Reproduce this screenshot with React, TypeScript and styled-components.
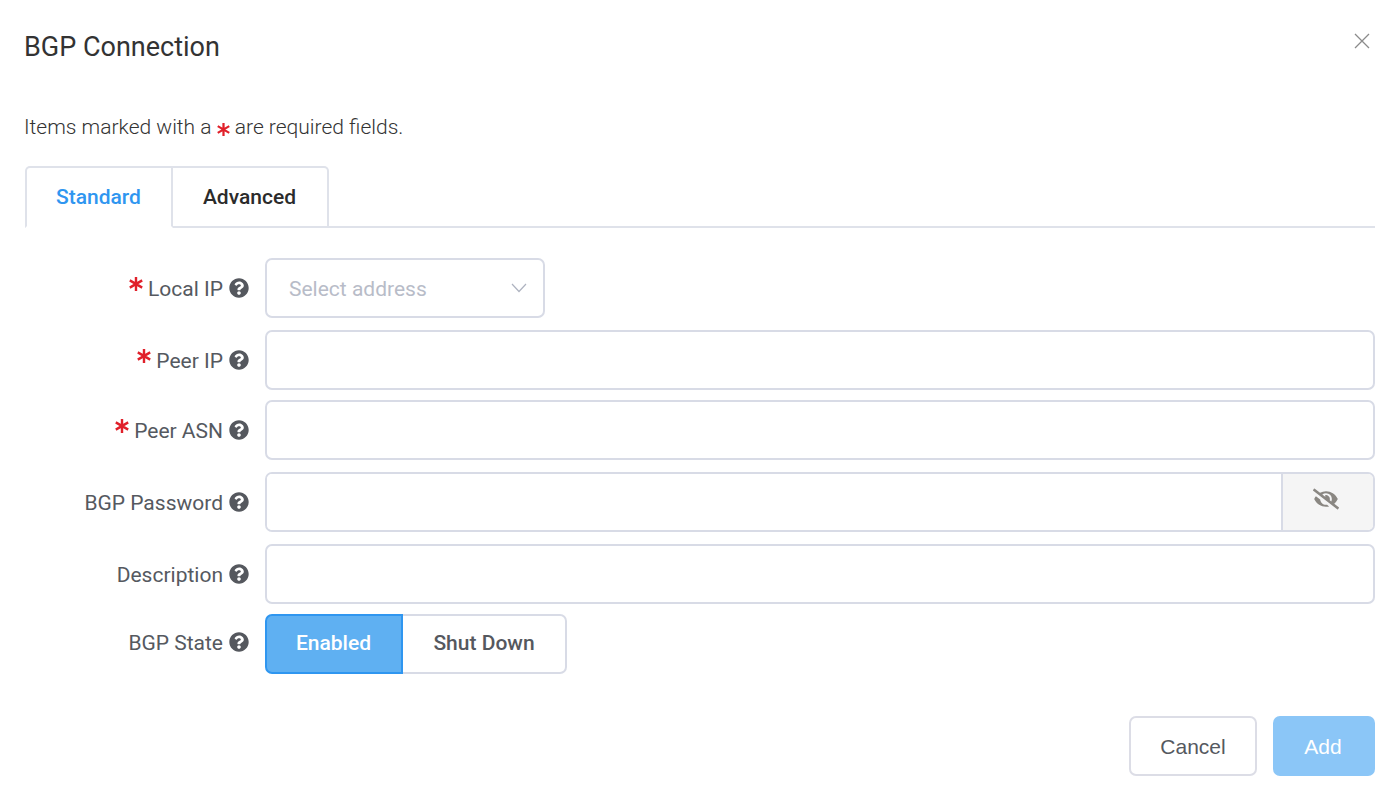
import React, { FC } from 'react';
import styled, { createGlobalStyle } from 'styled-components';
import { FaQuestionCircle, FaEyeSlash } from 'react-icons/fa';

const GlobalStyle = createGlobalStyle`
  html, body {
    margin: 0;
    padding: 0;
    background: #fff;
    font-family: Roboto, "Liberation Sans", sans-serif;
  }
`;

const Required: FC<{ inline?: boolean }> = ({ inline }) => (
  <Star $inline={inline} viewBox="0 0 14 14" aria-hidden="true">
    <path d="M7 0v14M0.8 3.4l12.4 7.2M13.2 3.4L0.8 10.6" />
  </Star>
);

const Help: FC = () => (
  <HelpIcon>
    <FaQuestionCircle />
  </HelpIcon>
);

const Field: FC<{
  label: string;
  required?: boolean;
  tight?: boolean;
  raised?: boolean;
  children: React.ReactNode;
}> = ({ label, required, tight, raised, children }) => (
  <Row $tight={tight}>
    <Label $raised={raised}>
      {required && <Required />}
      <LabelText>{label}</LabelText>
      <Help />
    </Label>
    {children}
  </Row>
);

const App: FC = () => (
  <Dialog>
    <GlobalStyle />
    <Header>
      <Title>BGP Connection</Title>
      <CloseBtn aria-label="Close">
        <svg width="16" height="16" viewBox="0 0 16 16">
          <path d="M1 1l14 14M15 1L1 15" stroke="#8b8b8b" strokeWidth="1.3" fill="none" />
        </svg>
      </CloseBtn>
    </Header>
    <Note>
      Items marked with a <Required inline /> are required fields.
    </Note>
    <Tabs>
      <Tab $active>Standard</Tab>
      <Tab>Advanced</Tab>
    </Tabs>
    <Form>
      <Field label="Local IP" required>
        <SelectBox>
          <Placeholder>Select address</Placeholder>
          <svg width="16" height="10" viewBox="0 0 16 10">
            <path d="M1 1l7 7.5L15 1" stroke="#aeb3c0" strokeWidth="1.2" fill="none" />
          </svg>
        </SelectBox>
      </Field>
      <Field label="Peer IP" required tight>
        <Input />
      </Field>
      <Field label="Peer ASN" required>
        <Input />
      </Field>
      <Field label="BGP Password">
        <InputGroup>
          <GroupInput />
          <Addon>
            <FaEyeSlash />
          </Addon>
        </InputGroup>
      </Field>
      <Field label="Description" tight>
        <Input />
      </Field>
      <Field label="BGP State" raised>
        <Toggle>
          <ToggleBtn $on>Enabled</ToggleBtn>
          <ToggleBtn>Shut Down</ToggleBtn>
        </Toggle>
      </Field>
    </Form>
    <Footer>
      <CancelBtn>Cancel</CancelBtn>
      <AddBtn>Add</AddBtn>
    </Footer>
  </Dialog>
);

export default App;

const Dialog = styled.div`
  width: 1400px;
  height: 804px;
  box-sizing: border-box;
  padding: 0 25px 0 24px;
  overflow: hidden;
  background: #fff;
`;

const Header = styled.header`
  display: flex;
  justify-content: space-between;
  height: 94px;
  padding-top: 30px;
  box-sizing: border-box;
`;

const Title = styled.h1`
  margin: 0;
  font-size: 27px;
  line-height: 34px;
  font-weight: 400;
  color: #333;
`;

const CloseBtn = styled.button`
  width: 16px;
  height: 16px;
  padding: 0;
  margin: 3px 5px 0 0;
  border: 0;
  background: none;
`;

const Note = styled.p`
  margin: 0;
  height: 72px;
  padding-top: 20px;
  box-sizing: border-box;
  font-size: 21px;
  line-height: 26px;
  font-weight: 300;
  color: #333;
`;

const Star = styled.svg<{ $inline?: boolean }>`
  width: ${p => (p.$inline ? 13 : 14)}px;
  height: ${p => (p.$inline ? 13 : 14)}px;
  flex-shrink: 0;
  align-self: flex-start;
  margin: ${p => (p.$inline ? '0 0 -2px 0' : '4px 5px 0 0')};
  path {
    stroke: #e0202a;
    stroke-width: 2.4;
    fill: none;
  }
`;

const Tabs = styled.div`
  display: flex;
  height: 62px;
  margin-left: 1px;
  box-sizing: border-box;
  border-bottom: 2px solid #dfe2ea;
`;

const Tab = styled.div<{ $active?: boolean }>`
  box-sizing: border-box;
  height: 62px;
  padding: ${p => (p.$active ? '0 30px 0 29px' : '0 31px 0 30px')};
  display: flex;
  align-items: center;
  border: 2px solid #dfe2ea;
  border-left-width: ${p => (p.$active ? 2 : 0)}px;
  border-bottom-color: ${p => (p.$active ? '#fff' : '#dfe2ea')};
  border-radius: ${p => (p.$active ? '5px 0 0 0' : '0 5px 0 0')};
  font-size: 21px;
  font-weight: 500;
  color: ${p => (p.$active ? '#2f96f0' : '#2b2b2b')};
`;

const Form = styled.div`
  display: flex;
  flex-direction: column;
  margin-top: 30px;
`;

const Row = styled.div<{ $tight?: boolean }>`
  display: grid;
  grid-template-columns: 225px 1fr;
  column-gap: 16px;
  align-items: center;
  margin-bottom: ${p => (p.$tight ? 10 : 12)}px;
  &:last-child {
    margin-bottom: 0;
  }
`;

const Label = styled.label<{ $raised?: boolean }>`
  display: flex;
  justify-content: flex-end;
  align-items: center;
  margin-bottom: ${p => (p.$raised ? 4 : 0)}px;
  font-size: 21px;
  line-height: 28px;
  color: #555960;
`;

const LabelText = styled.span`
  padding-top: 2px;
  white-space: nowrap;
`;

const HelpIcon = styled.span`
  display: flex;
  margin: -1px 0 0 6px;
  font-size: 20px;
  color: #55585e;
`;

const fieldBorder = '2px solid #d8dbe6';

const Input = styled.input`
  box-sizing: border-box;
  width: 100%;
  height: 60px;
  border: ${fieldBorder};
  border-radius: 7px;
  background: #fff;
  outline: none;
`;

const SelectBox = styled.div`
  box-sizing: border-box;
  width: 280px;
  height: 60px;
  padding: 0 16px 0 22px;
  display: flex;
  align-items: center;
  justify-content: space-between;
  border: ${fieldBorder};
  border-radius: 7px;
`;

const Placeholder = styled.span`
  padding-top: 2px;
  font-size: 21px;
  color: #b8bcc8;
`;

const InputGroup = styled.div`
  display: flex;
  height: 60px;
  box-sizing: border-box;
  border: ${fieldBorder};
  border-radius: 7px;
  overflow: hidden;
`;

const GroupInput = styled.input`
  flex: 1;
  min-width: 0;
  border: 0;
  outline: none;
`;

const Addon = styled.div`
  width: 92px;
  display: flex;
  align-items: center;
  justify-content: center;
  padding: 0 4px 7px 0;
  box-sizing: border-box;
  border-left: ${fieldBorder};
  background: #f5f5f5;
  color: #8a8782;
  font-size: 26px;
`;

const Toggle = styled.div`
  display: flex;
  width: 302px;
  height: 60px;
`;

const ToggleBtn = styled.div<{ $on?: boolean }>`
  box-sizing: border-box;
  display: flex;
  align-items: center;
  justify-content: center;
  width: ${p => (p.$on ? 138 : 164)}px;
  padding: 0 ${p => (p.$on ? 1 : 0)}px 2px 0;
  font-size: 21px;
  font-weight: 500;
  color: ${p => (p.$on ? '#fff' : '#55585e')};
  background: ${p => (p.$on ? '#5fb0f2' : '#fff')};
  border: 2px solid ${p => (p.$on ? '#2f96f0' : '#d8dbe6')};
  border-left-width: ${p => (p.$on ? 2 : 0)}px;
  border-radius: ${p => (p.$on ? '7px 0 0 7px' : '0 7px 7px 0')};
`;

const Footer = styled.footer`
  display: flex;
  justify-content: flex-end;
  gap: 16px;
  margin-top: 42px;
`;

const FooterBtn = styled.button`
  box-sizing: border-box;
  height: 60px;
  padding-top: 2px;
  font-family: "Liberation Sans", Arial, sans-serif;
  font-size: 21px;
  border-radius: 7px;
`;

const CancelBtn = styled(FooterBtn)`
  width: 128px;
  border: 2px solid #dcdde6;
  background: #fff;
  color: #555960;
`;

const AddBtn = styled(FooterBtn)`
  width: 102px;
  padding-right: 8px;
  border: 0;
  background: #8bc6f7;
  color: #fff;
`;
